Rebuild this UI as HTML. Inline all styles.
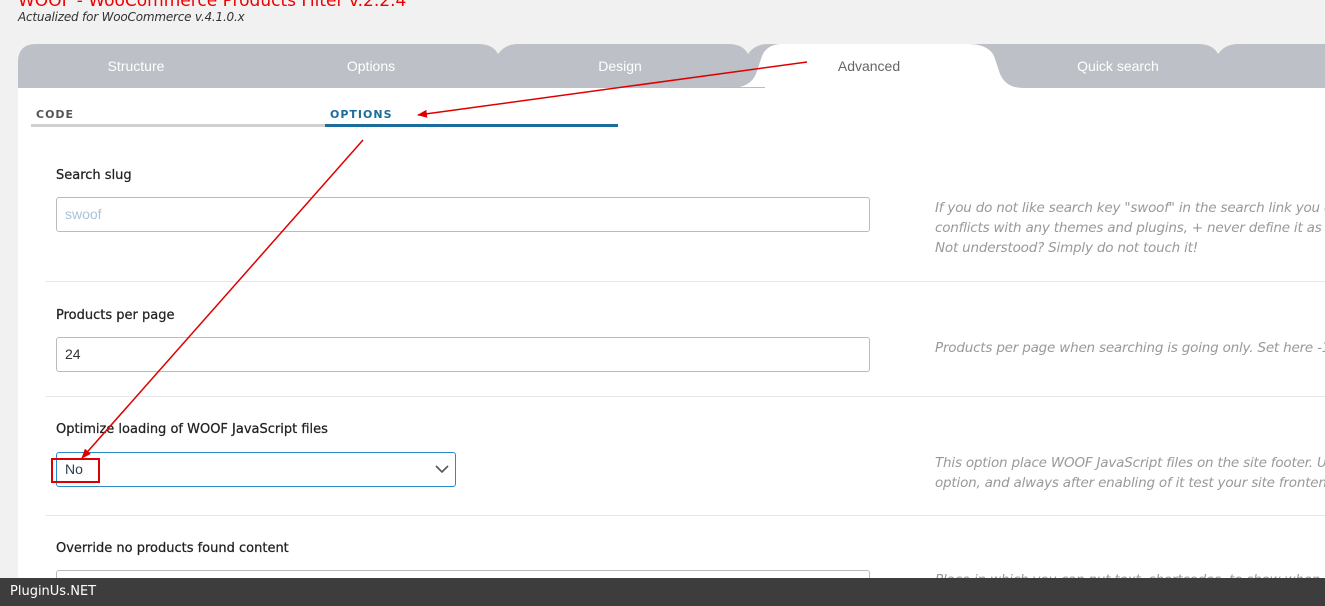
<!DOCTYPE html>
<html><head><meta charset="utf-8"><style>
*{box-sizing:border-box;margin:0;padding:0}
html,body{width:1325px;height:606px;overflow:hidden}
body{background:#f1f1f1;font-family:"DejaVu Sans","Liberation Sans",sans-serif;position:relative}
.a{position:absolute}
.title{left:18px;top:-9px;color:#e00;font-size:17px;white-space:nowrap}
.sub{left:18px;top:10px;font-size:12px;font-style:italic;color:#333;letter-spacing:-.2px}
.band{left:18px;top:44px}
.tabt{top:58px;font-size:14px;color:#fff;font-family:"Liberation Sans",sans-serif;width:200px;text-align:center}
.content{left:18px;top:88px;width:1307px;height:518px;background:#fff}
.sub2{font-size:11px;font-weight:bold;letter-spacing:1px;top:108px}
.lbl{left:56px;font-size:13px;color:#222;-webkit-text-stroke:.25px #222}
.inp{left:56px;width:814px;height:35px;border:1px solid #bbb;border-radius:3px;background:#fff;font-family:"Liberation Sans",sans-serif;font-size:14px;padding:8px 8px}
.clip{left:0;top:0;width:1325px;height:578px;overflow:hidden}
.hint{left:935px;font-size:13.5px;font-style:italic;color:#999;line-height:20px;white-space:nowrap;letter-spacing:-.2px}
.sep{left:46px;width:1279px;height:1px;background:#e6e6e6}
</style></head><body>
<div class="a title">WOOF - WooCommerce Products Filter v.2.2.4</div>
<div class="a sub">Actualized for WooCommerce v.4.1.0.x</div>
<svg class="a band" width="1307" height="44" viewBox="0 0 1307 44">
<path d="M0 44V18Q0 0 18 0H460Q475 0 480 10Q487 0 500 0H710Q725 0 730 10Q737 0 750 0H1180Q1195 0 1200 10Q1207 0 1220 0H1307V44Z" fill="#bdc1c7"/>
<path d="M712 44Q732 44 738 30L744 12Q749 0 764 0H950Q970 0 976 12L982 30Q988 44 1005 44Z" fill="#fff"/>
</svg>
<div class="a tabt" style="left:36px">Structure</div>
<div class="a tabt" style="left:271px">Options</div>
<div class="a tabt" style="left:520px">Design</div>
<div class="a tabt" style="left:769px;color:#666">Advanced</div>
<div class="a tabt" style="left:1018px">Quick search</div>
<div class="a content"></div>
<div class="a" style="left:718px;top:87px;width:47px;height:1px;background:#bbb"></div>
<div class="a sub2" style="left:36px;color:#555">CODE</div>
<div class="a sub2" style="left:330px;color:#1a6d9c">OPTIONS</div>
<div class="a" style="left:31px;top:124px;width:294px;height:3px;background:#d0d0d0"></div>
<div class="a" style="left:325px;top:124px;width:293px;height:3px;background:#1a6d9c"></div>

<div class="a clip">
<div class="a lbl" style="top:168px">Search slug</div>
<div class="a inp" style="top:197px;color:#a8c3dc">swoof</div>
<div class="a hint" style="top:198px">If you do not like search key "swoof" in the search link you can<br>conflicts with any themes and plugins, + never define it as sy<br>Not understood? Simply do not touch it!</div>
<div class="a sep" style="top:281px"></div>

<div class="a lbl" style="top:308px">Products per page</div>
<div class="a inp" style="top:337px;color:#333">24</div>
<div class="a hint" style="top:338px">Products per page when searching is going only. Set here -1</div>
<div class="a sep" style="top:396px"></div>

<div class="a lbl" style="top:422px">Optimize loading of WOOF JavaScript files</div>
<div class="a inp" style="top:452px;width:400px;border-color:#2b8acb;color:#2c3e50">No</div>
<svg class="a" style="left:435px;top:464px" width="14" height="10"><path d="M1 2L7 8L13 2" stroke="#555" stroke-width="1.6" fill="none"/></svg>
<div class="a" style="left:51px;top:458px;width:49px;height:25px;border:2px solid #d00"></div>
<div class="a hint" style="top:453px">This option place WOOF JavaScript files on the site footer. Us<br>option, and always after enabling of it test your site frontend</div>
<div class="a sep" style="top:515px"></div>

<div class="a lbl" style="top:541px">Override no products found content</div>
<div class="a inp" style="top:570px;height:30px"></div>
<div class="a hint" style="top:570px">Place in which you can put text, shortcodes, to show when</div>
</div>

<svg class="a" style="left:0;top:0" width="1325" height="606">
<defs><marker id="m" markerWidth="10" markerHeight="8" refX="9" refY="4" orient="auto" markerUnits="userSpaceOnUse"><path d="M0 0L10 4L0 8Z" fill="#d00"/></marker></defs>
<line x1="807" y1="62" x2="418" y2="115" stroke="#d00" stroke-width="1.5" marker-end="url(#m)"/>
<line x1="363" y1="140" x2="82" y2="458" stroke="#d00" stroke-width="1.5" marker-end="url(#m)"/>
</svg>
<div class="a" style="left:0;top:578px;width:1325px;height:28px;background:#3d3d3d;color:#fff;font-size:13px;padding:6px 10px;font-family:'DejaVu Sans',sans-serif">PluginUs.NET</div>
</body></html>
